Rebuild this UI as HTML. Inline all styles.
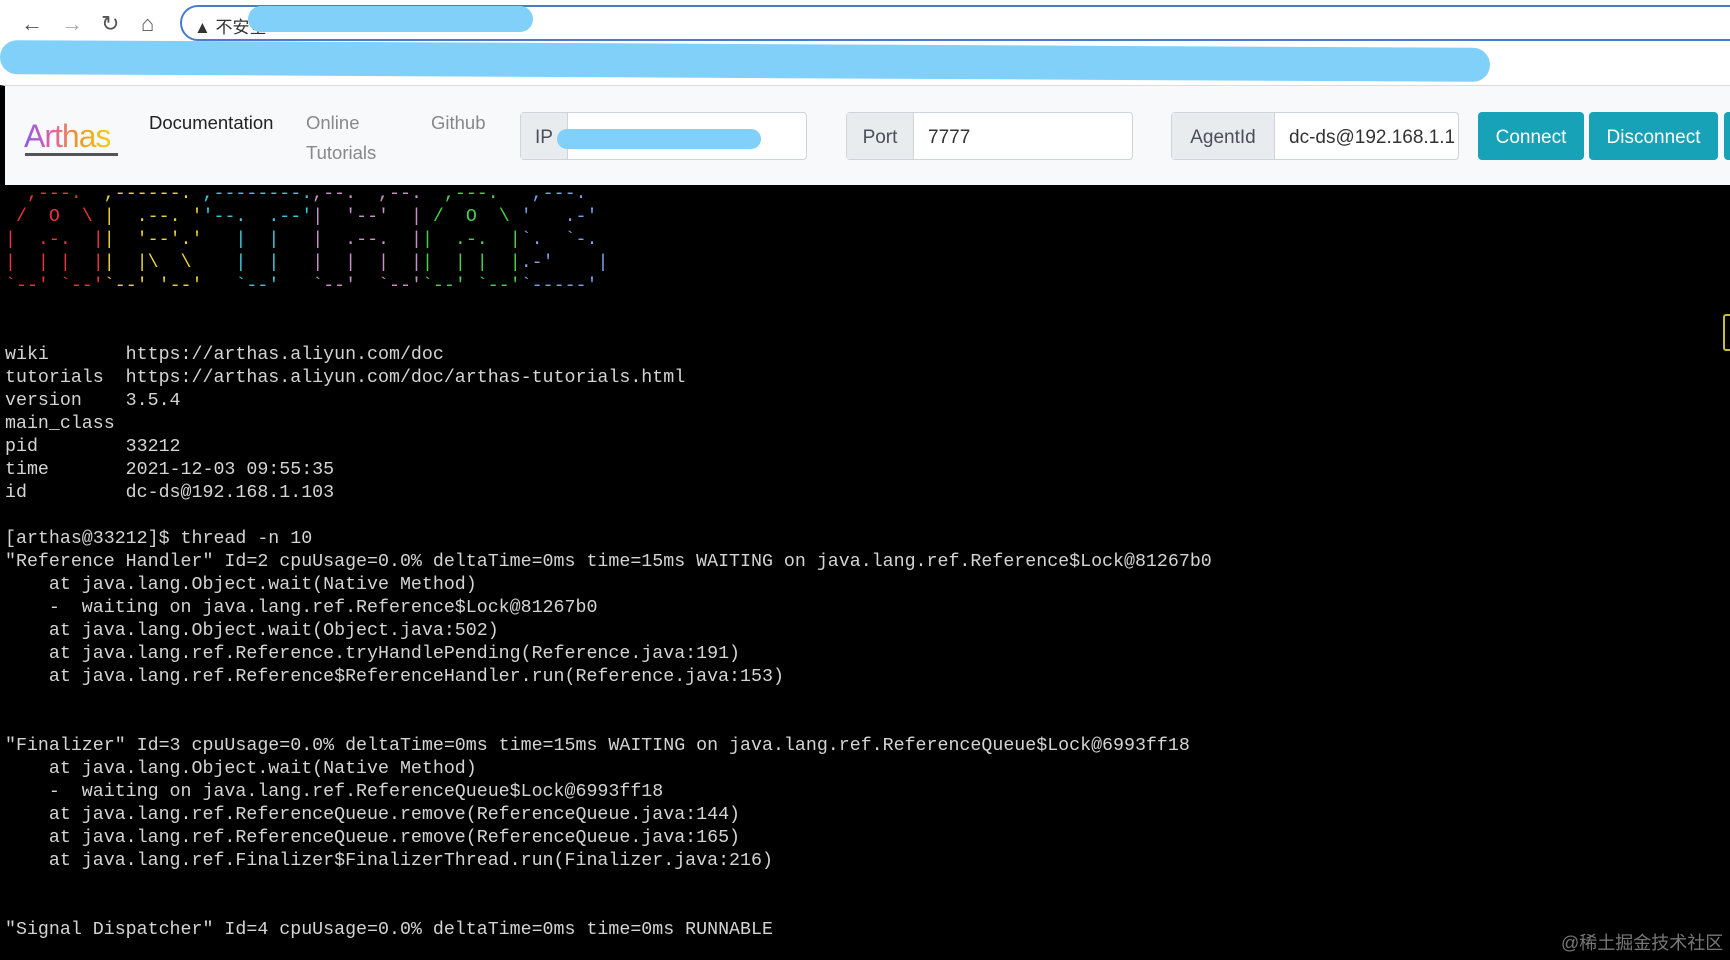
<!DOCTYPE html>
<html><head><meta charset="utf-8"><style>
*{margin:0;padding:0;box-sizing:border-box}
body{width:1730px;height:960px;overflow:hidden;background:#000;font-family:"Liberation Sans",sans-serif;position:relative}
.top{position:absolute;left:0;top:0;width:1730px;height:85px;background:#fff}
.addr{position:absolute;left:180px;top:5px;width:1600px;height:36px;border:2px solid #4a7bd0;border-radius:18px;background:#fff}
.ic{position:absolute;top:11px;color:#555;font-size:22px}
.scrib{position:absolute;background:#80d0fa;border-radius:20px}
.nav{position:absolute;left:0;top:85px;width:1730px;height:100px;background:#f8f9fa;border-top:1px solid #dcdcdc;border-left:5px solid #000}
.nl{position:absolute;font-size:18.5px;color:#888}
.grp{position:absolute;top:112px;height:48px;border:1px solid #ced4da;border-radius:4px;background:#fff;display:flex;font-size:19px;color:#495057}
.grp .ad{background:#e9ecef;border-right:1px solid #ced4da;display:flex;align-items:center;justify-content:center;padding-top:3px}
.grp .v{display:flex;align-items:center;padding-left:14px;padding-top:3px;color:#333;white-space:nowrap;overflow:hidden}
.btn{position:absolute;top:112px;height:48px;background:#17a2b8;color:#fff;border-radius:4px;font-size:19px;display:flex;align-items:center;justify-content:center;padding-top:3px}
pre{position:absolute;left:5px;top:183px;font-family:"Liberation Mono",monospace;font-size:18.3px;line-height:23px;color:#d4d4d4}
.r{color:#e8343a}.y{color:#e8d23a}.c{color:#3ac8d8}.m{color:#c890c8}.g{color:#4ad04a}.b{color:#7aa0e8}
</style></head><body>
<div class="top">
<span class="ic" style="left:21px">&#8592;</span>
<span class="ic" style="left:61px;color:#aaa">&#8594;</span>
<span class="ic" style="left:101px">&#8635;</span>
<span class="ic" style="left:141px">&#8962;</span>
<div class="addr"><span style="position:absolute;left:12px;top:6px;font-size:17px;color:#333;font-family:'Liberation Sans','Noto Sans CJK SC',sans-serif">&#9650; 不安全</span></div>
<div class="scrib" style="left:248px;top:6px;width:285px;height:26px"></div>
<div class="scrib" style="left:0;top:44px;width:1490px;height:34px;transform:rotate(0.3deg)"></div>
</div>
<div class="nav"></div>
<div style="position:absolute;left:24px;top:118px;font-size:32px;background:linear-gradient(90deg,#8a5cf0,#e060a0,#f0a020,#f0d020);-webkit-background-clip:text;color:transparent;letter-spacing:-1px">Arthas</div>
<div style="position:absolute;left:25px;top:153px;width:93px;height:3px;background:#555"></div>
<div class="nl" style="left:149px;top:112px;color:#222">Documentation</div>
<div class="nl" style="left:306px;top:112px">Online</div>
<div class="nl" style="left:306px;top:142px">Tutorials</div>
<div class="nl" style="left:431px;top:112px">Github</div>
<div class="grp" style="left:520px;width:287px"><div class="ad" style="width:47px">IP</div><div class="v"></div></div>
<div class="scrib" style="left:557px;top:129px;width:204px;height:20px"></div>
<div class="grp" style="left:846px;width:287px"><div class="ad" style="width:67px">Port</div><div class="v">7777</div></div>
<div class="grp" style="left:1171px;width:288px"><div class="ad" style="width:103px">AgentId</div><div class="v" style="width:180px">dc-ds@192.168.1.103</div></div>
<div class="btn" style="left:1478px;width:106px">Connect</div>
<div class="btn" style="left:1589px;width:129px">Disconnect</div>
<div class="btn" style="left:1724px;width:20px"></div>
<pre><span class="r">  ,---.  </span><span class="y">,------. </span><span class="c">,--------.</span><span class="m">,--.  ,--.</span><span class="g">  ,---.  </span><span class="b"> ,---.</span>
<span class="r"> /  O  \ </span><span class="y">|  .--. '</span><span class="c">'--.  .--'</span><span class="m">|  '--'  |</span><span class="g"> /  O  \ </span><span class="b">'   .-'</span>
<span class="r">|  .-.  |</span><span class="y">|  '--'.'</span><span class="c">   |  |   </span><span class="m">|  .--.  |</span><span class="g">|  .-.  |</span><span class="b">`.  `-.</span>
<span class="r">|  | |  |</span><span class="y">|  |\  \ </span><span class="c">   |  |   </span><span class="m">|  |  |  |</span><span class="g">|  | |  |</span><span class="b">.-'    |</span>
<span class="r">`--' `--'</span><span class="y">`--' '--'</span><span class="c">   `--'   </span><span class="m">`--'  `--'</span><span class="g">`--' `--'</span><span class="b">`-----'</span>


wiki       https://arthas.aliyun.com/doc
tutorials  https://arthas.aliyun.com/doc/arthas-tutorials.html
version    3.5.4
main_class
pid        33212
time       2021-12-03 09:55:35
id         dc-ds@192.168.1.103

[arthas@33212]$ thread -n 10
"Reference Handler" Id=2 cpuUsage=0.0% deltaTime=0ms time=15ms WAITING on java.lang.ref.Reference$Lock@81267b0
    at java.lang.Object.wait(Native Method)
    -  waiting on java.lang.ref.Reference$Lock@81267b0
    at java.lang.Object.wait(Object.java:502)
    at java.lang.ref.Reference.tryHandlePending(Reference.java:191)
    at java.lang.ref.Reference$ReferenceHandler.run(Reference.java:153)


"Finalizer" Id=3 cpuUsage=0.0% deltaTime=0ms time=15ms WAITING on java.lang.ref.ReferenceQueue$Lock@6993ff18
    at java.lang.Object.wait(Native Method)
    -  waiting on java.lang.ref.ReferenceQueue$Lock@6993ff18
    at java.lang.ref.ReferenceQueue.remove(ReferenceQueue.java:144)
    at java.lang.ref.ReferenceQueue.remove(ReferenceQueue.java:165)
    at java.lang.ref.Finalizer$FinalizerThread.run(Finalizer.java:216)


"Signal Dispatcher" Id=4 cpuUsage=0.0% deltaTime=0ms time=0ms RUNNABLE</pre>
<div style="position:absolute;left:1723px;top:314px;width:10px;height:37px;border:2px solid #c8c030;border-radius:3px"></div>
<div style="position:absolute;left:1561px;top:929px;font-size:18px;color:#777;font-family:'Liberation Sans','Noto Sans CJK SC',sans-serif">@稀土掘金技术社区</div>
</body></html>
